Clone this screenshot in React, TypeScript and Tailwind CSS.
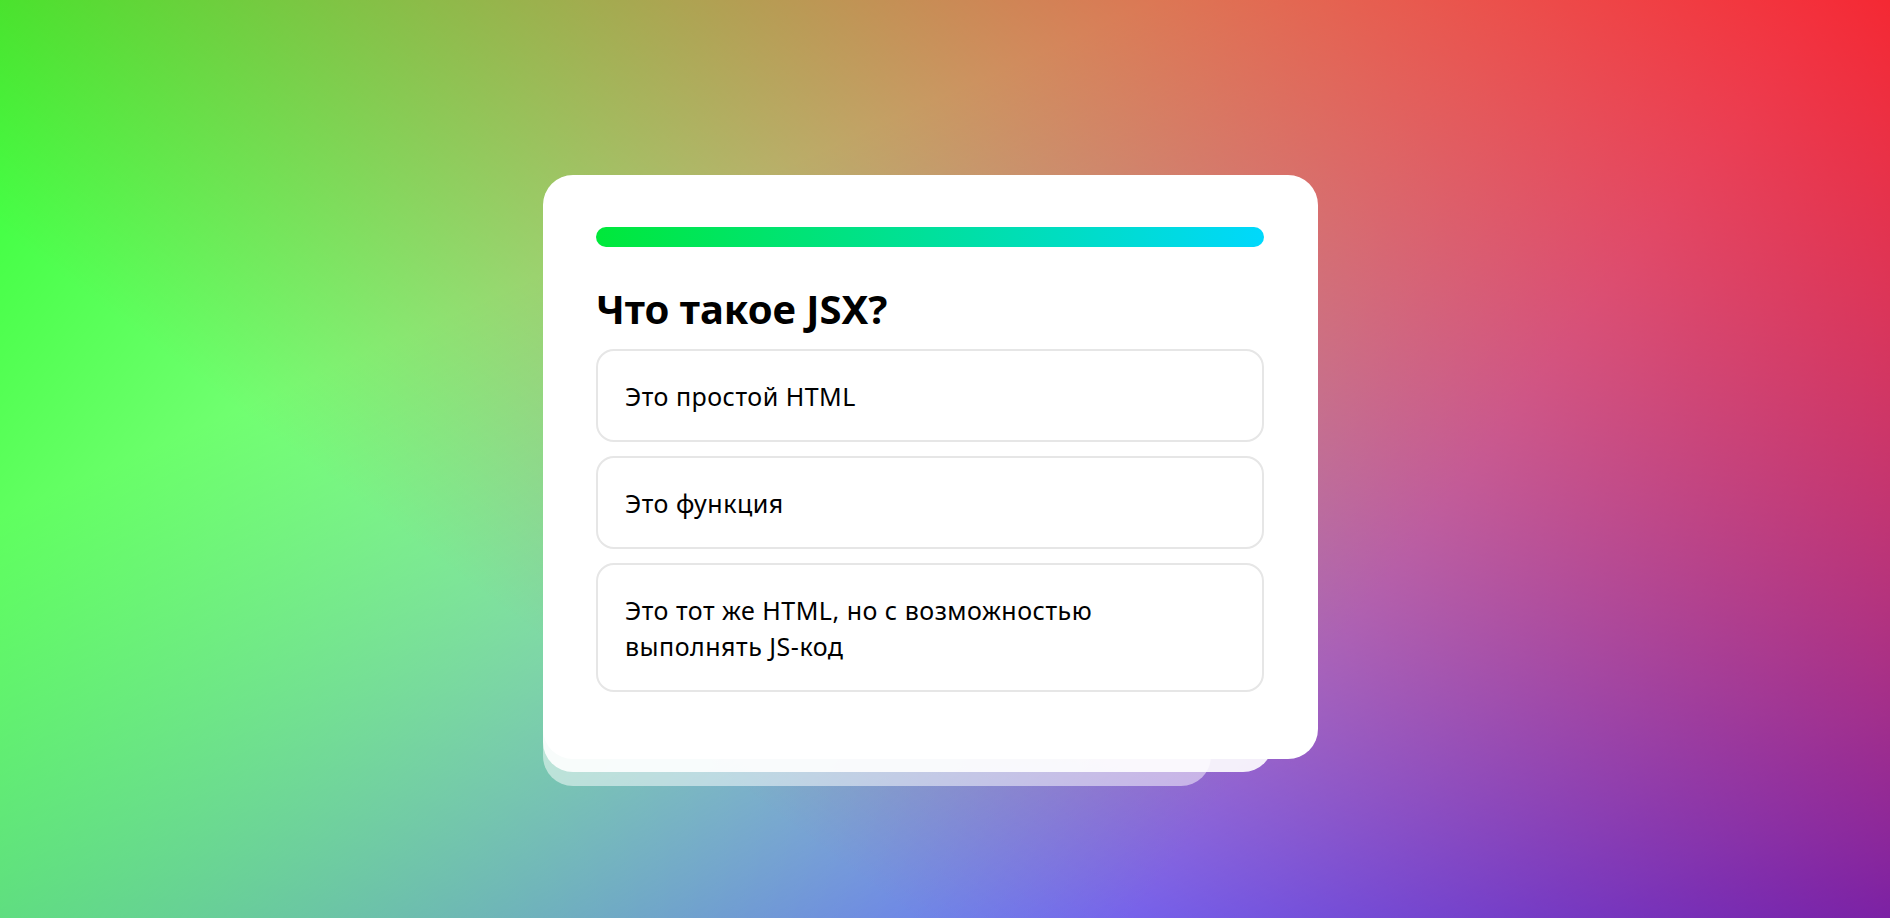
import React from "react";

const options = [
  "Это простой HTML",
  "Это функция",
  "Это тот же HTML, но с возможностью выполнять JS-код",
];

export default function App() {
  return (
    <div
      className="min-h-screen w-full bg-white bg-[linear-gradient(217deg,rgba(255,0,0,.8),rgba(255,0,0,0)_70.71%),linear-gradient(127deg,rgba(0,255,0,.8),rgba(0,255,0,0)_70.71%),linear-gradient(336deg,rgba(0,0,255,.8),rgba(0,0,255,0)_70.71%)] flex items-start pl-[543px] pt-[175px]"
      style={{ fontFamily: '"Noto Sans", "Open Sans", sans-serif' }}
    >
      <div className="relative w-[775px]">
        <div className="absolute left-0 right-[107px] bottom-[-27px] h-[120px] rounded-[30px] bg-white/50" />
        <div className="absolute left-0 right-[45px] bottom-[-13px] h-[120px] rounded-[30px] bg-white/90" />
        <div className="relative rounded-[30px] bg-white pt-[52px] pb-[67px] pl-[53px] pr-[54px]">
          <div className="h-[20px] w-full rounded-full bg-[linear-gradient(90deg,#00e83a,#00d8fc)]" />
          <h1 className="mt-[38px] text-[40px] leading-[48px] font-bold text-black">
            Что такое JSX?
          </h1>
          <ul className="mt-[16px] flex flex-col gap-[14px]">
            {options.map((o) => (
              <li
                key={o}
                className="rounded-[18px] border-2 border-[#e6e6e6] pl-[27px] pr-[120px] py-[26.5px] text-[25px] tracking-[0.5px] leading-[36px] text-black"
              >
                {o}
              </li>
            ))}
          </ul>
        </div>
      </div>
    </div>
  );
}
